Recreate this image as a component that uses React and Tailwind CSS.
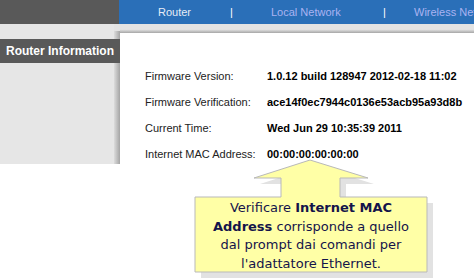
import React from 'react';

const rows = [
  ['Firmware Version:', '1.0.12 build 128947 2012-02-18 11:02'],
  ['Firmware Verification:', 'ace14f0ec7944c0136e53acb95a93d8b'],
  ['Current Time:', 'Wed Jun 29 10:35:39 2011'],
  ['Internet MAC Address:', '00:00:00:00:00:00'],
];

function Callout() {
  const shape = '120,5 178,23 150,23 150,42 237,42 237,117 5,117 5,42 91,42 91,23 64,23';
  return (
    <div className="absolute left-[190px] top-[155px] w-[250px] h-[123px]">
      <svg width="250" height="123" className="absolute left-0 top-0">
        <polygon points={shape} transform="translate(6,6)" fill="#e2e2e2" />
        <polygon points={shape} fill="#ffffa6" stroke="#b9b9b9" strokeWidth="1" />
      </svg>
      <div className="absolute left-[5px] top-[42px] w-[232px] h-[75px] pt-[3px] flex items-center justify-center text-center font-['DejaVu_Sans',Verdana,sans-serif] text-[13px] leading-[18.5px] text-[#14144a]">
        <div>
          Verificare <b>Internet MAC</b>
          <br />
          <b>Address</b> corrisponde a quello
          <br />
          dal prompt dai comandi per
          <br />
          l'adattatore Ethernet.
        </div>
      </div>
    </div>
  );
}

export default function App() {
  return (
    <div className="relative w-[474px] h-[278px] overflow-hidden bg-white font-['Liberation_Sans',Arial,sans-serif]">
      {/* top nav */}
      <div className="flex h-[24px]">
        <div className="w-[119px] bg-[#595959]" />
        <div className="flex-1 flex items-center bg-[#2a6fb8] pl-[39px] text-[11px] whitespace-nowrap overflow-hidden">
          <span className="w-[72px] shrink-0 text-[#e6ecf6]">Router</span>
          <span className="w-[41px] shrink-0 text-white">|</span>
          <span className="w-[112px] shrink-0 text-[#aab3f2]">Local Network</span>
          <span className="w-[31px] shrink-0 text-white">|</span>
          <span className="shrink-0 text-[#aab3f2]">Wireless Network</span>
        </div>
      </div>

      <div className="flex">
        {/* sidebar */}
        <div className="w-[120px] flex flex-col">
          <div className="flex h-[15px]">
            <div className="w-[114px] bg-[#e6e6e6]" />
            <div className="w-[6px] flex flex-col">
              <div className="h-[7px] bg-[#e3e3e3]" />
              <div className="flex-1 bg-[linear-gradient(to_right,#dcdcdc,#a4a4a4)]" />
            </div>
          </div>
          <div className="h-[24px] bg-[#595959] flex items-center pl-[6px] text-white font-bold text-[12px]">
            Router Information
          </div>
          <div className="flex h-[101px]">
            <div className="w-[114px] bg-[#e6e6e6]" />
            <div className="w-[6px] bg-[linear-gradient(to_right,#dcdcdc,#a4a4a4)]" />
          </div>
        </div>

        {/* content */}
        <div className="flex-1 flex flex-col">
          <div className="h-[9px] bg-[linear-gradient(to_bottom,#e3e3e3_0%,#e3e3e3_60%,#a6a6a6_100%)]" />
          <div className="pt-[30px] pl-[25px]">
            {rows.map(([label, value]) => (
              <div key={label} className="flex items-center h-[26px] whitespace-nowrap">
                <div className="w-[122px] shrink-0 text-[11px] text-[#222]">{label}</div>
                <div className="text-[11px] font-bold text-black">{value}</div>
              </div>
            ))}
          </div>
        </div>
      </div>

      <Callout />
    </div>
  );
}
